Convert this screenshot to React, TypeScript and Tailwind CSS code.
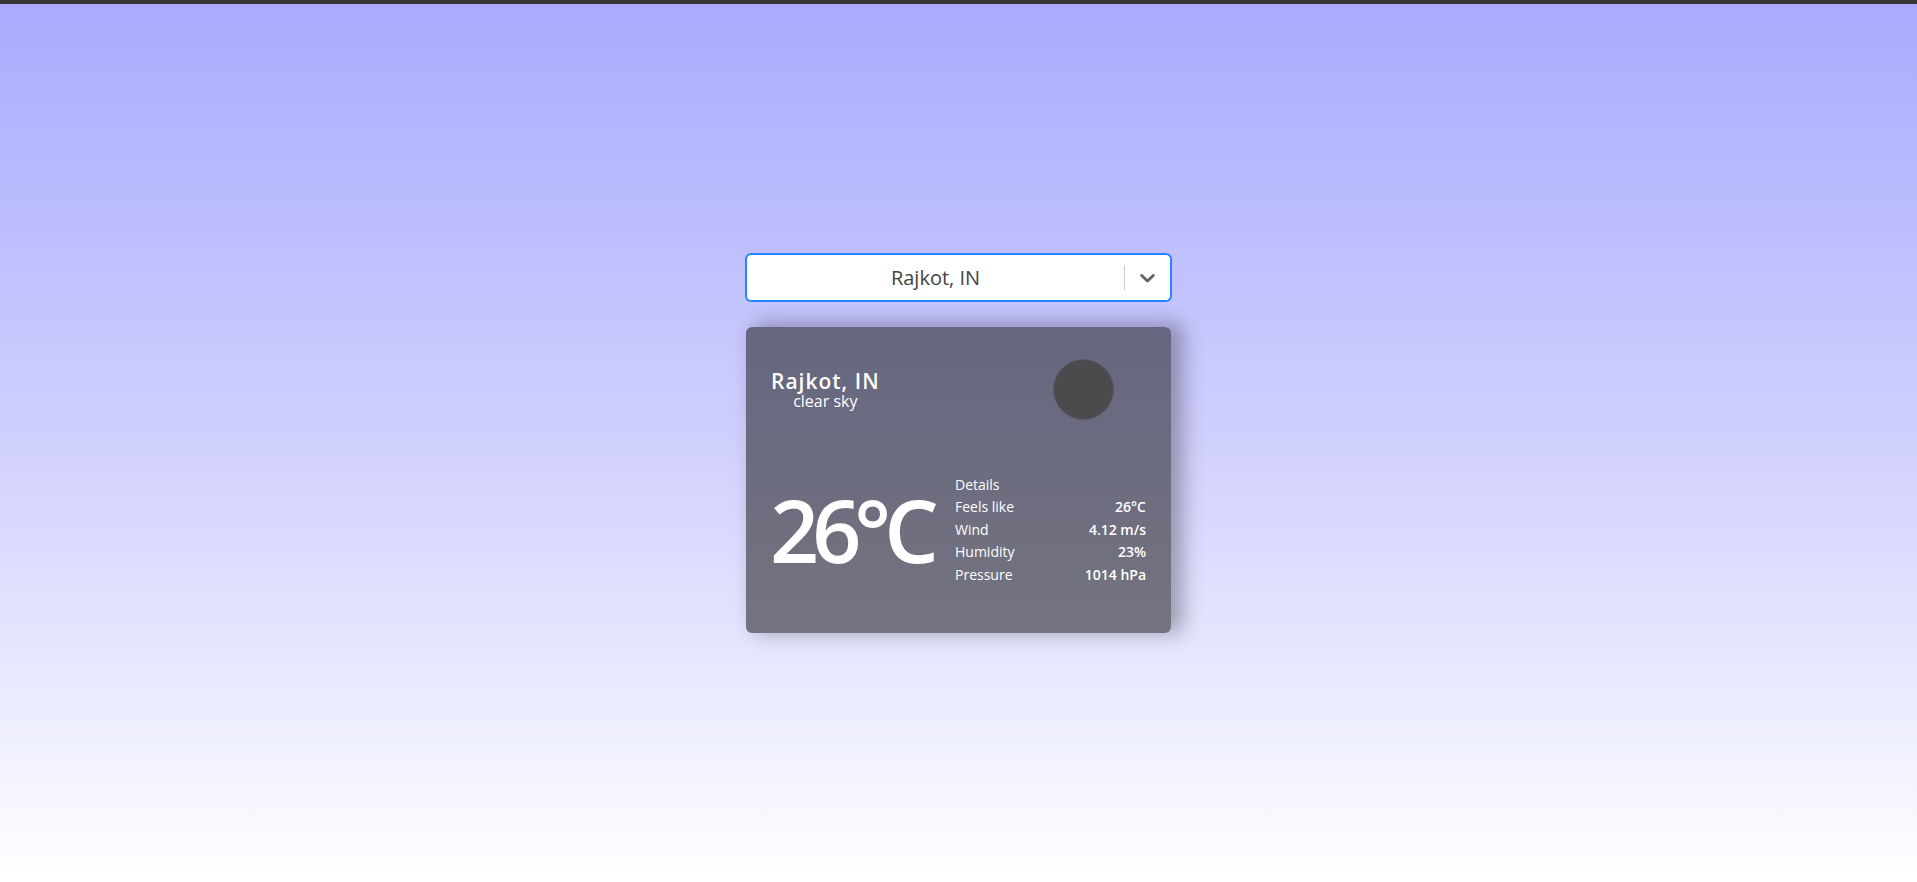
import React from "react";

const params = [
  { label: "Feels like", value: "26°C" },
  { label: "Wind", value: "4.12 m/s" },
  { label: "Humidity", value: "23%" },
  { label: "Pressure", value: "1014 hPa" },
];

function CitySelect() {
  return (
    <div className="w-[425px] h-[47px] mx-auto bg-white rounded-[5px] border border-[#2684ff] shadow-[0_0_0_1px_#2684ff] flex items-center">
      <div className="flex-1 text-center text-[20px] text-[#444]">Rajkot, IN</div>
      {/* indicator separator */}
      <span className="w-px self-stretch my-[10px] bg-[#ccc]"></span>
      <div className="p-[10px] text-[#666]">
        <svg viewBox="0 0 20 20" width="25" height="25" fill="currentColor">
          <path d="M4.516 7.548c0.436-0.446 1.043-0.481 1.576 0l3.908 3.747 3.908-3.747c0.533-0.481 1.141-0.446 1.574 0 0.436 0.445 0.408 1.197 0 1.615-0.406 0.418-4.695 4.502-4.695 4.502-0.217 0.223-0.502 0.335-0.787 0.335s-0.57-0.112-0.789-0.335c0 0-4.287-4.084-4.695-4.502s-0.436-1.17 0-1.615z" />
        </svg>
      </div>
    </div>
  );
}

function WeatherCard() {
  return (
    <div className="w-[425px] mx-auto mt-[26px] rounded-md bg-gradient-to-b from-[#666680] to-[#74737f] text-white shadow-[10px_-2px_20px_2px_rgba(0,0,0,0.3)] px-[25px] pb-[25px]">
      {/* top: city + icon */}
      <div className="flex justify-between items-center h-[125px]">
        <div className="flex flex-col items-center">
          <p className="text-[21px] font-semibold leading-[22px] tracking-[1px]">Rajkot, IN</p>
          <p className="text-[16px] leading-[18px]">clear sky</p>
        </div>
        <div className="w-[125px] h-[125px] flex items-center justify-center">
          <div className="w-[61px] h-[61px] rounded-full bg-[#4b4b4d] border border-[#58586a]"></div>
        </div>
      </div>

      {/* bottom: temperature + details */}
      <div className="flex items-center h-[156px]">
        <p className="w-[160px] shrink-0 whitespace-nowrap text-[86px] font-semibold tracking-[-7px] leading-none -ml-[1px]">
          26°C
        </p>
        <div className="flex-1 pl-[25px] text-[14px] leading-[22.5px]">
          <div className="flex justify-between">
            <span>Details</span>
          </div>
          {params.map((p) => (
            <div key={p.label} className="flex justify-between">
              <span>{p.label}</span>
              <span className="font-semibold">{p.value}</span>
            </div>
          ))}
        </div>
      </div>
    </div>
  );
}

export default function App() {
  return (
    <div
      className="min-h-[882px] border-t-4 border-[#353535] bg-gradient-to-b from-[#aaaaff] via-[#d0d0fd] to-[#ffffff]"
      style={{ fontFamily: '"Open Sans", "Noto Sans", sans-serif' }}
    >
      <div className="pt-[250px]">
        <CitySelect />
        <WeatherCard />
      </div>
    </div>
  );
}
